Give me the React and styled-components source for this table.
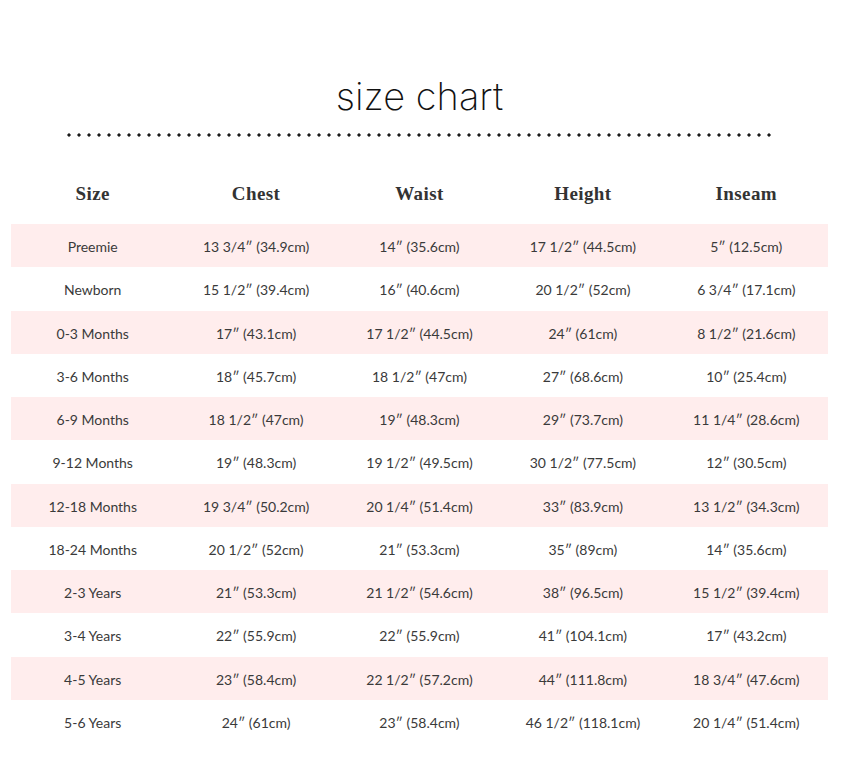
import React from "react";
import styled, { createGlobalStyle } from "styled-components";

const GlobalStyle = createGlobalStyle`
  body {
    margin: 0;
    background: #fff;
  }
`

const Page = styled.div`
  width: 817px;
  margin-left: 11px;
  padding-top: 70px;
`

const Title = styled.h1`
  margin: 0;
  text-align: center;
  font-family: "Inter", "Lato", sans-serif;
  font-weight: 150;
  font-size: 38px;
  line-height: 52px;
  color: #111;
`

const Dots = styled.div`
  width: 712px;
  height: 4px;
  margin: 11px auto 0;
  background-image: radial-gradient(circle, #1a1a1a 1.4px, transparent 1.8px);
  background-size: 10px 4px;
  background-repeat: repeat-x;
`

const Table = styled.div`
  margin-top: 26px;
`

const Row = styled.div`
  display: grid;
  grid-template-columns: repeat(5, 1fr);
  align-items: center;
  height: ${p => (p.$head ? "61px" : "43.25px")};
  background: ${p => (p.$pink ? "#ffeded" : "transparent")};
`

const HeadCell = styled.div`
  text-align: center;
  font-family: "Liberation Serif", serif;
  font-weight: bold;
  font-size: 19px;
  letter-spacing: 0.4px;
  color: #333;
`

const Cell = styled.div`
  padding-top: 2px;
  text-align: center;
  font-family: "Lato", sans-serif;
  font-size: 14px;
  color: #3a3a3a;
`

const headers = ["Size", "Chest", "Waist", "Height", "Inseam"]

const rows = [
  ["Preemie", "13 3/4″ (34.9cm)", "14″ (35.6cm)", "17 1/2″ (44.5cm)", "5″ (12.5cm)"],
  ["Newborn", "15 1/2″ (39.4cm)", "16″ (40.6cm)", "20 1/2″ (52cm)", "6 3/4″ (17.1cm)"],
  ["0-3 Months", "17″ (43.1cm)", "17 1/2″ (44.5cm)", "24″ (61cm)", "8 1/2″ (21.6cm)"],
  ["3-6 Months", "18″ (45.7cm)", "18 1/2″ (47cm)", "27″ (68.6cm)", "10″ (25.4cm)"],
  ["6-9 Months", "18 1/2″ (47cm)", "19″ (48.3cm)", "29″ (73.7cm)", "11 1/4″ (28.6cm)"],
  ["9-12 Months", "19″ (48.3cm)", "19 1/2″ (49.5cm)", "30 1/2″ (77.5cm)", "12″ (30.5cm)"],
  ["12-18 Months", "19 3/4″ (50.2cm)", "20 1/4″ (51.4cm)", "33″ (83.9cm)", "13 1/2″ (34.3cm)"],
  ["18-24 Months", "20 1/2″ (52cm)", "21″ (53.3cm)", "35″ (89cm)", "14″ (35.6cm)"],
  ["2-3 Years", "21″ (53.3cm)", "21 1/2″ (54.6cm)", "38″ (96.5cm)", "15 1/2″ (39.4cm)"],
  ["3-4 Years", "22″ (55.9cm)", "22″ (55.9cm)", "41″ (104.1cm)", "17″ (43.2cm)"],
  ["4-5 Years", "23″ (58.4cm)", "22 1/2″ (57.2cm)", "44″ (111.8cm)", "18 3/4″ (47.6cm)"],
  ["5-6 Years", "24″ (61cm)", "23″ (58.4cm)", "46 1/2″ (118.1cm)", "20 1/4″ (51.4cm)"],
]

export default function App() {
  return (
    <Page>
      <GlobalStyle />
      <Title>size chart</Title>
      <Dots />
      <Table>
        <Row $head>
          {headers.map(h => <HeadCell key={h}>{h}</HeadCell>)}
        </Row>
        {rows.map((r, i) => (
          <Row key={r[0]} $pink={i % 2 === 0}>
            {r.map((c, j) => <Cell key={j}>{c}</Cell>)}
          </Row>
        ))}
      </Table>
    </Page>
  )
}
